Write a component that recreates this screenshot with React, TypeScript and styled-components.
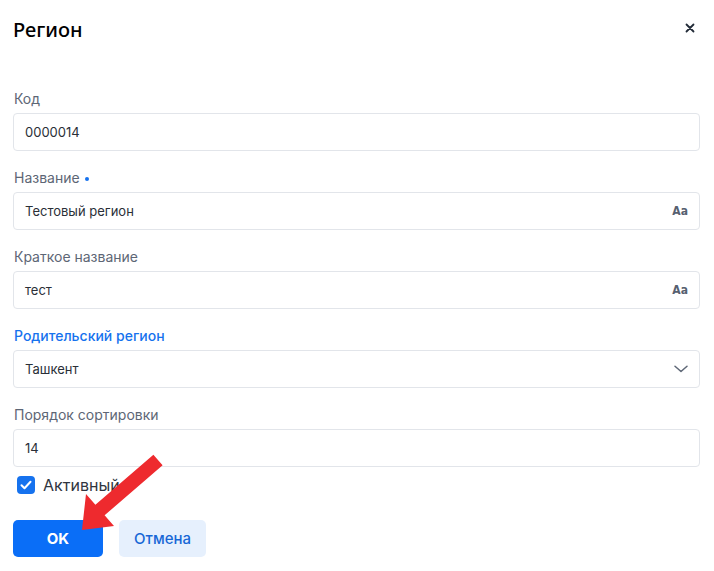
import * as React from 'react';
import styled, { createGlobalStyle } from 'styled-components';

const GlobalStyle = createGlobalStyle`
  html, body {
    margin: 0;
    padding: 0;
    background: #ffffff;
  }
  body {
    font-family: Inter, 'Noto Sans', sans-serif;
  }
`;

const Dialog = styled.div`
  position: relative;
  width: 714px;
  height: 571px;
  background: #ffffff;
  box-sizing: border-box;
  overflow: hidden;
`;

const Header = styled.div`
  display: flex;
  align-items: center;
  justify-content: space-between;
  padding: 14px 16px 0 13px;
  height: 32px;
`;

const Title = styled.h2`
  margin: 0;
  font-family: 'Noto Sans', sans-serif;
  font-size: 20px;
  font-weight: 500;
  line-height: 32px;
  color: #000000;
`;

const CloseButton = styled.button`
  border: 0;
  background: none;
  padding: 0;
  width: 16px;
  height: 16px;
  display: flex;
  align-items: center;
  justify-content: center;
  cursor: pointer;
  margin-top: -4px;
`;

const Form = styled.div`
  display: flex;
  flex-direction: column;
  gap: 17px;
  padding: 43px 14px 0 13px;
`;

const Field = styled.div`
  display: flex;
  flex-direction: column;
  gap: 4px;
`;

const Label = styled.label<{ $accent?: boolean }>`
  display: flex;
  align-items: center;
  gap: 5px;
  padding-left: 1px;
  font-size: 14px;
  line-height: 20px;
  font-weight: ${(p) => (p.$accent ? 500 : 400)};
  color: ${(p) => (p.$accent ? '#1672ee' : '#5d6675')};
`;

const RequiredDot = styled.span`
  width: 4px;
  height: 4px;
  border-radius: 50%;
  background: #1672ee;
  margin-top: 2px;
`;

const InputBox = styled.div`
  display: flex;
  align-items: center;
  justify-content: space-between;
  height: 38px;
  box-sizing: border-box;
  padding: 0 11px 0 11px;
  border: 1px solid #e2e5ea;
  border-radius: 4px;
  background: #ffffff;
`;

const InputText = styled.span`
  font-size: 13px;
  color: #2a2f37;
`;

const CaseTag = styled.span`
  font-family: 'DejaVu Sans Condensed', 'DejaVu Sans', sans-serif;
  font-stretch: condensed;
  font-size: 12px;
  font-weight: 700;
  color: #566070;
`;

const CheckRow = styled.div`
  display: flex;
  align-items: center;
  gap: 8px;
  padding-left: 4px;
  margin-top: -10px;
  height: 22px;
`;

const CheckBox = styled.span`
  width: 18px;
  height: 18px;
  border-radius: 4px;
  background: #1672ee;
  display: flex;
  align-items: center;
  justify-content: center;
`;

const CheckLabel = styled.span`
  font-size: 16px;
  color: #2f3540;
`;

const Actions = styled.div`
  display: flex;
  gap: 16px;
  margin-top: 7px;
`;

const Button = styled.button<{ $primary?: boolean }>`
  height: 37px;
  width: ${(p) => (p.$primary ? '90px' : '87px')};
  border: 0;
  border-radius: 5px;
  font-family: Inter, sans-serif;
  font-size: 15px;
  font-weight: ${(p) => (p.$primary ? 700 : 500)};
  background: ${(p) => (p.$primary ? '#0a6ef7' : '#e6f0fd')};
  color: ${(p) => (p.$primary ? '#ffffff' : '#1767d6')};
  cursor: pointer;
`;

const Pointer = styled.svg`
  position: absolute;
  left: 0;
  top: 0;
  pointer-events: none;
`;

type FieldProps = {
  label: string;
  value: string;
  required?: boolean;
  accent?: boolean;
  suffix?: 'case' | 'chevron';
};

function FormField({ label, value, required, accent, suffix }: FieldProps) {
  return (
    <Field>
      <Label $accent={accent}>
        {label}
        {required && <RequiredDot />}
      </Label>
      <InputBox>
        <InputText>{value}</InputText>
        {suffix === 'case' && <CaseTag>Aa</CaseTag>}
        {suffix === 'chevron' && (
          <svg width="14" height="8" viewBox="0 0 14 8" fill="none">
            <path d="M1 1.2l6 5.3 6-5.3" stroke="#5f6877" strokeWidth="1.5" strokeLinecap="round" strokeLinejoin="round" />
          </svg>
        )}
      </InputBox>
    </Field>
  );
}

export default function App() {
  return (
    <Dialog>
      <GlobalStyle />
      <Header>
        <Title>Регион</Title>
        <CloseButton aria-label="close">
          <svg width="10" height="10" viewBox="0 0 10 10">
            <path d="M1.5 1.5l7 7M8.5 1.5l-7 7" stroke="#222b38" strokeWidth="1.8" strokeLinecap="round" />
          </svg>
        </CloseButton>
      </Header>
      <Form>
        <FormField label="Код" value="0000014" />
        <FormField label="Название" value="Тестовый регион" required suffix="case" />
        <FormField label="Краткое название" value="тест" suffix="case" />
        <FormField label="Родительский регион" value="Ташкент" accent suffix="chevron" />
        <FormField label="Порядок сортировки" value="14" />
        <CheckRow>
          <CheckBox>
            <svg width="12" height="10" viewBox="0 0 12 10" fill="none">
              <path d="M1.5 5.2l3 3 6-6.5" stroke="#ffffff" strokeWidth="2" strokeLinecap="round" strokeLinejoin="round" />
            </svg>
          </CheckBox>
          <CheckLabel>Активный</CheckLabel>
        </CheckRow>
        <Actions>
          <Button $primary>OK</Button>
          <Button>Отмена</Button>
        </Actions>
      </Form>
      <Pointer width="714" height="571" viewBox="0 0 714 571">
        <polygon
          points="82,530 86,494 95.4,504.7 153.4,454.7 162.6,465.3 104.6,515.3 114,526"
          fill="#ee2a2e"
        />
      </Pointer>
    </Dialog>
  );
}
